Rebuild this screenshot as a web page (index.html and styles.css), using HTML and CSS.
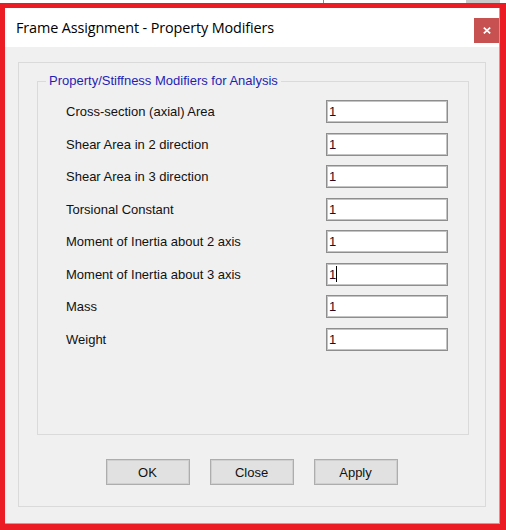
FILE: index.html
```html
<!DOCTYPE html>
<html>
<head>
<meta charset="utf-8">
<link rel="stylesheet" href="styles.css">
</head>
<body>
<div class="screen">
  <div class="strip"></div>
  <div class="frame">
    <div class="dialog">
      <div class="titlebar">
        <span class="title">Frame Assignment - Property Modifiers</span>
        <div class="close">
          <svg width="8" height="7" viewBox="0 0 8 7"><path d="M0.8 0.6 L7.2 6.4 M7.2 0.6 L0.8 6.4" stroke="#fff" stroke-width="1.7" fill="none"/></svg>
        </div>
      </div>
      <div class="client">
        <div class="outer">
          <div class="group">
            <span class="legend">Property/Stiffness Modifiers for Analysis</span>
            <div class="rows">
              <div class="row"><span class="label">Cross-section (axial) Area</span><div class="field">1</div></div>
              <div class="row"><span class="label">Shear Area in 2 direction</span><div class="field">1</div></div>
              <div class="row"><span class="label">Shear Area in 3 direction</span><div class="field">1</div></div>
              <div class="row"><span class="label">Torsional Constant</span><div class="field">1</div></div>
              <div class="row"><span class="label">Moment of Inertia about 2 axis</span><div class="field">1</div></div>
              <div class="row"><span class="label">Moment of Inertia about 3 axis</span><div class="field">1<span class="caret"></span></div></div>
              <div class="row"><span class="label">Mass</span><div class="field">1</div></div>
              <div class="row"><span class="label">Weight</span><div class="field">1</div></div>
            </div>
          </div>
          <div class="buttons">
            <div class="btn">OK</div>
            <div class="btn">Close</div>
            <div class="btn">Apply</div>
          </div>
        </div>
      </div>
    </div>
  </div>
</div>
</body>
</html>
```
FILE: styles.css
```css
html, body {
  margin: 0;
  padding: 0;
  background: #fff;
}
.screen {
  width: 506px;
  height: 530px;
  overflow: hidden;
}
.strip {
  height: 3px;
  background:
    linear-gradient(to right, transparent 323px, #8c8c8c 323px, #8c8c8c 324px, transparent 324px),
    linear-gradient(to right, transparent 466px, #c9c9c9 466px, #c9c9c9 500px, transparent 500px),
    #fff;
}
.frame {
  border-style: solid;
  border-color: #ec1c24;
  border-width: 5px 6px 6px 5px;
  width: 495px;
  height: 516px;
}
.dialog {
  box-sizing: border-box;
  width: 495px;
  height: 516px;
  border-right: 1px solid #a8a8a8;
  border-bottom: 1px solid #a8a8a8;
  display: flex;
  flex-direction: column;
}
.titlebar {
  height: 39px;
  flex: none;
  background: #fff;
  display: flex;
  align-items: center;
  justify-content: space-between;
  padding-left: 11px;
}
.title {
  font-family: "Open Sans", "Noto Sans", sans-serif;
  font-size: 14.4px;
  color: #000;
  letter-spacing: -0.12px;
}
.close {
  width: 25px;
  height: 25px;
  background: #c75050;
  display: flex;
  align-items: center;
  justify-content: center;
  align-self: flex-start;
  margin-top: 10px;
}
.client {
  flex: 1;
  background: #f0f0f0;
  padding: 15px 13px 16px 13px;
}
.outer {
  box-sizing: border-box;
  height: 445px;
  border: 1px solid #dadada;
  padding: 18px 16px 0 18px;
  display: flex;
  flex-direction: column;
}
.group {
  position: relative;
  box-sizing: border-box;
  height: 354px;
  border: 1px solid #dadada;
  padding: 18px 20px 0 28px;
}
.legend {
  position: absolute;
  left: 8px;
  top: -9px;
  padding: 0 3px;
  background: #f0f0f0;
  font-family: "Liberation Sans", Arial, sans-serif;
  font-size: 13px;
  line-height: 16px;
  color: #1f1fb4;
}
.rows {
  display: flex;
  flex-direction: column;
  gap: 9.5px;
}
.row {
  display: flex;
  align-items: center;
  justify-content: space-between;
  height: 23px;
}
.label {
  font-family: "Liberation Sans", Arial, sans-serif;
  font-size: 13px;
  color: #111;
}
.field {
  box-sizing: border-box;
  width: 122px;
  height: 23px;
  background: #fff;
  border: 1px solid #8e8e8e;
  box-shadow: inset 0 0 0 1px #c4c4c4;
  padding-left: 2px;
  display: flex;
  align-items: center;
  font-family: "Liberation Sans", Arial, sans-serif;
  font-size: 13px;
  color: #2a0820;
}
.caret {
  display: inline-block;
  width: 1px;
  height: 16px;
  background: #000;
  margin-left: 0;
}
.buttons {
  display: flex;
  justify-content: center;
  gap: 20px;
  margin-top: 24px;
  padding-right: 3px;
}
.btn {
  box-sizing: border-box;
  width: 84px;
  height: 26px;
  background: #e1e1e1;
  border: 1px solid #adadad;
  box-shadow: inset 0 0 0 1px #d0d0d0;
  display: flex;
  align-items: center;
  justify-content: center;
  font-family: "Liberation Sans", Arial, sans-serif;
  font-size: 13px;
  color: #111;
}
```
